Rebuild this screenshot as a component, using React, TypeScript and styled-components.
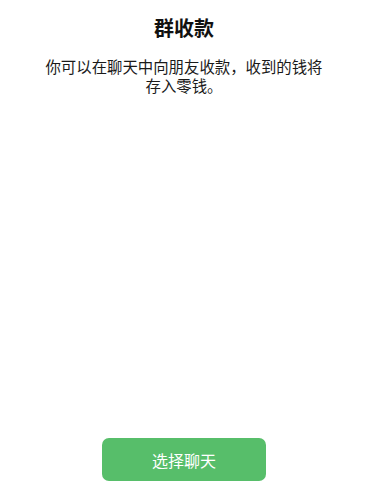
import React from "react";
import styled, { createGlobalStyle } from "styled-components";

const GlobalStyle = createGlobalStyle`
  html, body {
    margin: 0;
    padding: 0;
    background: #ffffff;
  }
  body {
    font-family: "Noto Sans CJK SC", "Noto Sans", sans-serif;
  }
`;

const Page = styled.div`
  height: 501px;
  display: flex;
  flex-direction: column;
  align-items: center;
  box-sizing: border-box;
  padding: 14px 40px 20px;
`;

const Title = styled.h1`
  margin: 0;
  font-size: 20px;
  line-height: 28px;
  font-weight: 700;
  color: #111111;
`;

const Description = styled.p`
  margin: 15px 0 0;
  font-size: 15.4px;
  line-height: 19px;
  color: #1a1a1a;
  text-align: center;
`;

const Spacer = styled.div`
  flex: 1;
`;

const PrimaryButton = styled.button`
  width: 164px;
  height: 43px;
  border: none;
  border-radius: 7px;
  background: #57be6a;
  color: #ffffff;
  font-family: inherit;
  font-size: 16px;
  cursor: pointer;
`;

const App: React.FC = () => {
  return (
    <>
      <GlobalStyle />
      <Page>
        <Title>群收款</Title>
        <Description>你可以在聊天中向朋友收款，收到的钱将存入零钱。</Description>
        <Spacer />
        <PrimaryButton>选择聊天</PrimaryButton>
      </Page>
    </>
  );
};

export default App;
